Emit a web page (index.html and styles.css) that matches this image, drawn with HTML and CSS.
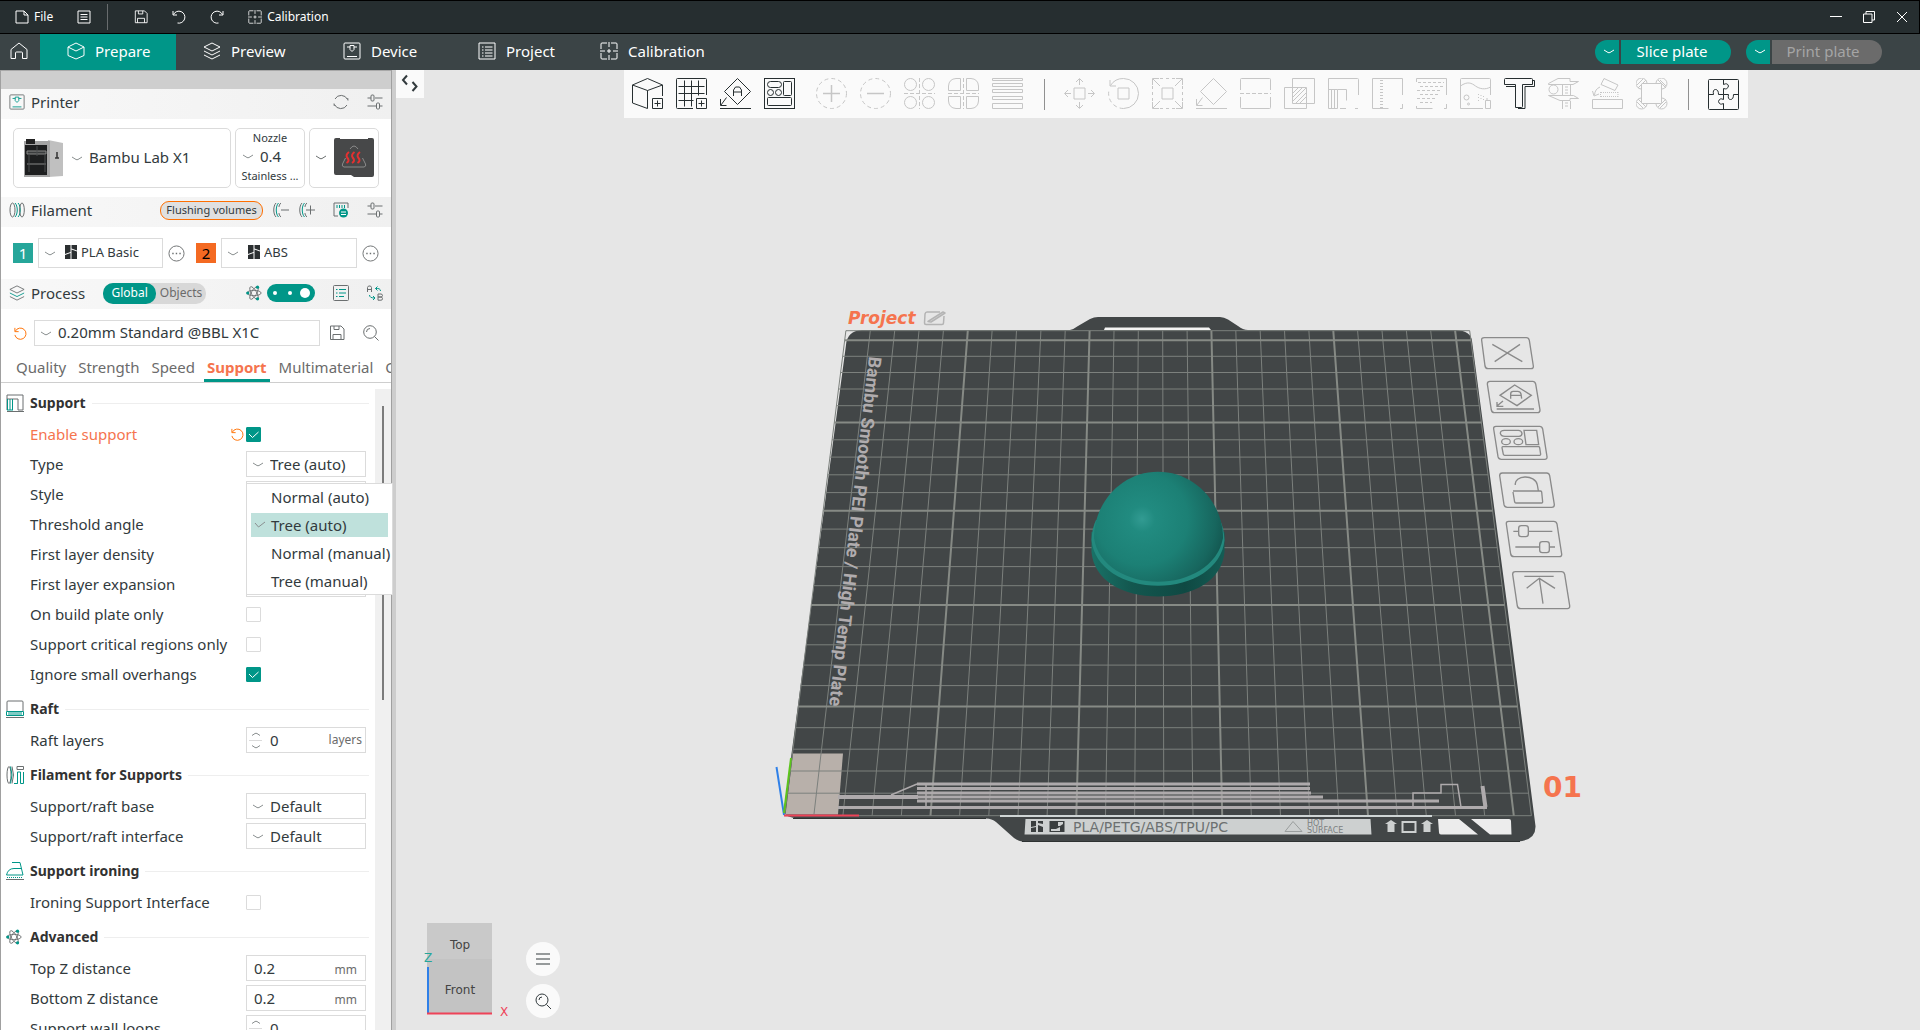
FILE: index.html
```html
<!DOCTYPE html>
<html lang="en">
<head>
  <meta charset="utf-8">
  <title>Bambu Studio</title>
  <meta name="viewport" content="width=device-width, initial-scale=1.0">
  <link rel="stylesheet" href="styles.css">
</head>
<body>

<!-- shared icons -->
<svg class="defs" aria-hidden="true">
  <symbol id="i-sliders" viewBox="0 0 16 16"><path d="M.5 4H4M8 4h7.500M.5 12H9M13 12h2.500"/><rect x="4" y="1" width="3" height="6" rx="1"/><rect x="9.500" y="9" width="3" height="6" rx="1"/></symbol>
  <symbol id="i-save" viewBox="0 0 16 16"><path d="M1.500 1h10.500L15 4v10.500H1.500zM4 14.500V9.500h8v5M5 1v3.500h5V1"/></symbol>
  <symbol id="i-reset" viewBox="0 0 16 16"><path d="M2 2v4h4M2.500 5.500A6 6 0 1 1 2 9.500"/></symbol>
  <symbol id="i-dots" viewBox="0 0 18 18"><circle cx="9" cy="9" r="8"/><path d="M4.500 9h1.500M8.200 9h1.500M12 9h1.500" stroke-width="1.500"/></symbol>
  <symbol id="i-calib" viewBox="0 0 18 18"><path d="M1 7V2q0-1 1-1h5M11 1h5q1 0 1 1v5M17 11v5q0 1-1 1h-5M7 17H2q-1 0-1-1v-5M0 9h5M13 9h5M9 0v5M9 13v5M7 9h4M9 7v4"/></symbol>
  <symbol id="i-layers" viewBox="0 0 18 18"><path d="M9 1l8 4-8 4-8-4z"/><path class="accent" d="M1 9l8 4 8-4"/><path d="M1 13l8 4 8-4" /></symbol>
  <symbol id="i-device" viewBox="0 0 18 18"><rect x="1" y="1" width="16" height="16" rx="1"/><g class="accent"><path d="M4 5h3M11 5h3M7 3.500h4v4L9 9.500 7 7.500zM4 14.500h10"/></g></symbol>
  <symbol id="i-atom" viewBox="0 0 18 18"><ellipse cx="9" cy="9" rx="8" ry="3"/><ellipse cx="9" cy="9" rx="8" ry="3" transform="rotate(60 9 9)"/><ellipse cx="9" cy="9" rx="8" ry="3" transform="rotate(120 9 9)"/><g fill="#009688" stroke="none"><circle cx="2" cy="9" r="1.800"/><circle cx="13" cy="2.500" r="1.800"/><circle cx="13" cy="15.500" r="1.800"/></g></symbol>
  <symbol id="i-brush" viewBox="0 0 12 14"><path d="M.5 13.500c2-1 1-3 3-4 2-.5 3.500 1 2.500 2.500-1 1.500-3 1.500-5.500 1.500zM4 9l5-7c1.500-1 2.500 0 2 1.500L6.500 10"/></symbol>
  <symbol id="i-brand" viewBox="0 0 12 14"><path fill="#2b2f31" stroke="none" d="M0 0h5.500v7L0 9zM0 10l5.500-2v6H0zM6.500 0H12v5.500L6.500 3.500zM6.500 4.500L12 6.500V14H6.500z"/></symbol>
</svg>

<header class="titlebar">
  <button class="tb-btn file"><svg class="ic13" viewBox="0 0 14 14"><path d="M1 1h8l4 4v8H1zM9 1v4h4"/></svg>File</button>
  <button class="tb-btn list" aria-label="Menu"><svg class="ic13" viewBox="0 0 14 14"><path d="M1 1h12v12H1zM3.500 4.500h7M3.500 7h7M3.500 9.500h7"/></svg></button>
  <span class="tb-sep"></span>
  <button class="tb-btn" aria-label="Save"><svg class="ic13"><use href="#i-save"/></svg></button>
  <button class="tb-btn" aria-label="Undo"><svg class="ic13" viewBox="0 0 14 14"><path d="M1 1v4h4M1.500 4.500A6 6 0 1 1 5.500 13"/></svg></button>
  <button class="tb-btn" aria-label="Redo"><svg class="ic13" viewBox="0 0 14 14"><path d="M13 1v4H9M12.500 4.500A6 6 0 1 0 8.500 13"/></svg></button>
  <button class="tb-btn"><svg class="ic13"><use href="#i-calib"/></svg>Calibration</button>
  <div class="win-btns">
    <button aria-label="Minimize"><svg class="ic12" viewBox="0 0 12 12"><path d="M0 5.500h12"/></svg></button>
    <button aria-label="Restore"><svg class="ic12" viewBox="0 0 12 12"><path d="M.5 3h8.500v8.500H.5zM3 3V.5h8.500V9H9"/></svg></button>
    <button aria-label="Close"><svg class="ic12" viewBox="0 0 12 12"><path d="M1 1l10 10M11 1L1 11"/></svg></button>
  </div>
</header>

<nav class="nav">
  <a href="#" class="home" aria-label="Home"><svg class="ic18" viewBox="0 0 18 18"><path d="M1 7.500L9 1l8 6.500V16.500h-4.500V11q0-1-1-1h-5q-1 0-1 1v5.500H1z"/></svg></a>
  <a href="#" class="active"><svg class="ic18" viewBox="0 0 18 18"><path d="M9 1l8 4v8.500L9 17l-8-3.500V5zM1 5l8 4 8-4"/></svg>Prepare</a>
  <a href="#"><svg class="ic18"><use href="#i-layers"/></svg>Preview</a>
  <a href="#"><svg class="ic18"><use href="#i-device"/></svg>Device</a>
  <a href="#"><svg class="ic18" viewBox="0 0 18 18"><path d="M1 1h16v16H1zM4 5h1.500M4 8h1.500M4 11h1.500M4 14h1.500M7 5h7.500M7 8h7.500M7 11h7.500M7 14h7.500"/></svg>Project</a>
  <a href="#"><svg class="ic18"><use href="#i-calib"/></svg>Calibration</a>
  <div class="actions">
    <div class="split">
      <button class="drop" aria-label="Slice options"><svg viewBox="0 0 12 6"><path d="M1 1l4 2.500q1 .5 2 0L11 1"/></svg></button><button class="main">Slice plate</button>
    </div>
    <div class="split">
      <button class="drop" aria-label="Print options"><svg viewBox="0 0 12 6"><path d="M1 1l4 2.500q1 .5 2 0L11 1"/></svg></button><button class="main" disabled>Print plate</button>
    </div>
  </div>
</nav>

<div class="workspace">

<aside class="sidebar">
  <div class="strip"></div>

  <div class="sec-head">
    <svg class="ic16"><use href="#i-device"/></svg><h2>Printer</h2>
    <div class="tools wide">
      <button aria-label="Sync"><svg class="ic16" viewBox="0 0 16 16"><path d="M2 5a7 7 0 0 1 12.500.5M14 11A7 7 0 0 1 1.500 10.500M1 9.500l.3 2.500M15 6.500L14.700 4"/></svg></button>
      <button aria-label="Printer settings"><svg class="ic16"><use href="#i-sliders"/></svg></button>
    </div>
  </div>

  <div class="printer">
    <div class="card model">
      <svg class="thumb" viewBox="0 0 40 40">
        <path d="M25 2l15 3v33l-15 1z" fill="#c0c0c0"/><path d="M1 3h26v36H1z" fill="#a4a4a4"/>
        <path d="M2 7h22v30H2z" fill="#1d1e1f"/><path d="M3 1h9v5H3z" fill="#222"/>
        <path d="M4 13h19v3H4zM4 26h19" fill="#3a3c3d" stroke="#888"/><path d="M14 8v10M6 16v18M22 16v18" stroke="#4b4d4e"/>
        <path d="M34 14v6M32 20h4" stroke="#333" stroke-width="1.500"/>
      </svg>
      <select class="bare big" aria-label="Printer"><option>Bambu Lab X1</option></select>
    </div>
    <div class="card nozzle">
      <label for="nozzle">Nozzle</label>
      <select id="nozzle" class="bare"><option>0.4</option></select>
      <span>Stainless ...</span>
    </div>
    <button class="card plate" aria-label="Plate type">
      <svg class="chev" viewBox="0 0 12 6"><path d="M1 1l4 2.500q1 .5 2 0L11 1"/></svg>
      <svg class="heat" viewBox="0 0 40 40">
        <path d="M2 0h4v1h28V0h4q2 0 2 2v35q0 2-2 2H20l-3-2H2q-2 0-2-2V2q0-2 2-2z" fill="#474849"/>
        <path d="M16 11q4-6 8 0M11.500 20L8.500 26q-1 2.500 1.500 3h20q2.500-.5 1.500-3L28.500 20" fill="none" stroke="#8a8a8a"/>
        <path d="M15 14q-4 3-1.500 6t-1 5M20.500 14q-4 3-1.500 6t-1 5M26 14q-4 3-1.500 6t-1 5" fill="none" stroke="#e53030" stroke-width="2"/>
      </svg>
    </button>
  </div>

  <div class="sec-head">
    <svg class="ic16" viewBox="0 0 16 16"><ellipse cx="3.500" cy="8" rx="2.500" ry="7"/><path class="accent" d="M6 1c3 3 3 11 0 14M9 1c3 3 3 11 0 14"/><ellipse cx="13" cy="8" rx="2.300" ry="7"/></svg><h2>Filament</h2>
    <div class="tools">
      <button class="flush">Flushing volumes</button>
      <button aria-label="Remove filament"><svg class="ic16" viewBox="0 0 16 16"><path d="M3 1C0 4 0 12 3 15M8 1c-1.500 1-2 3-2 4M8 15c-1.500-1-2-3-2-4M8 8h8"/><path class="accent" d="M5.500 1C2.500 4 2.500 12 5.500 15"/></svg></button>
      <button class="add" aria-label="Add filament"><svg class="ic16" viewBox="0 0 16 16"><path d="M3 1C0 4 0 12 3 15M8 1c-1.500 1-2 3-2 4M8 15c-1.500-1-2-3-2-4M7 8h9M11.500 3.500v9"/><path class="accent" d="M5.500 1C2.500 4 2.500 12 5.500 15"/></svg></button>
      <button class="ams" aria-label="Sync AMS"><svg class="ic16" viewBox="0 0 16 16"><path d="M1 6V1h14v5M1 6v8h4"/><path class="accent" d="M4 3v3M6.500 3v3M9 3v3M11.500 3v3"/><circle cx="10.500" cy="11" r="4.500" fill="#009688" stroke="none"/><path class="on-dot" d="M8 10h5M8 12.500h5"/></svg></button>
      <button aria-label="Filament settings"><svg class="ic16"><use href="#i-sliders"/></svg></button>
    </div>
  </div>

  <div class="filaments">
    <span class="swatch one">1</span>
    <div class="fil"><svg class="brand"><use href="#i-brand"/></svg><select aria-label="Filament 1"><option>PLA Basic</option></select></div>
    <button class="more" aria-label="Edit filament 1"><svg class="ic17"><use href="#i-dots"/></svg></button>
    <span class="swatch two">2</span>
    <div class="fil"><svg class="brand"><use href="#i-brand"/></svg><select aria-label="Filament 2"><option>ABS</option></select></div>
    <button class="more" aria-label="Edit filament 2"><svg class="ic17"><use href="#i-dots"/></svg></button>
  </div>

  <div class="sec-head process">
    <svg class="ic16"><use href="#i-layers"/></svg><h2>Process</h2>
    <div class="scope"><button class="on">Global</button><button>Objects</button></div>
    <div class="tools">
      <svg class="ic16"><use href="#i-atom"/></svg>
      <button class="mode" aria-label="Mode"><i></i><i></i><b></b></button>
      <button class="tpl" aria-label="Parameter list"><svg class="ic16" viewBox="0 0 16 16"><rect x=".5" y=".5" width="15" height="15" rx="1"/><path class="accent" d="M3 4.500h1.500M6 4.500h7M3 8h1.500M6 8h7M3 11.500h1.500M6 11.500h5"/></svg></button>
      <button class="cmp" aria-label="Compare presets"><svg class="ic16" viewBox="0 0 16 16"><path d="M.5 7V2.500l1-1.500h2l1 1.500V7M.5 4.500h4M11 9h3q1.500.2 1.500 1.500T14 12h-3zM11 12h3q1.500.2 1.500 1.700T14 15.200h-3z"/><path class="accent" d="M13.500 6q0-3-5-2.500M10.500 1.500l-2 2 2 2M2.500 10q0 3 5 3M6 11l2 2-2 2"/></svg></button>
    </div>
  </div>

  <div class="preset">
    <button aria-label="Reset preset"><svg class="ic15 orange"><use href="#i-reset"/></svg></button>
    <select aria-label="Process preset"><option>0.20mm Standard @BBL X1C</option></select>
    <button aria-label="Save preset"><svg class="ic16"><use href="#i-save"/></svg></button>
    <button class="find" aria-label="Search"><svg class="ic16" viewBox="0 0 16 16"><circle cx="7" cy="7" r="6.300"/><path d="M3.500 7A3.500 3.500 0 0 1 7 3.500M11.500 11.500L15.500 15.500"/></svg></button>
  </div>

  <div class="tabs">
    <a href="#">Quality</a><a href="#">Strength</a><a href="#">Speed</a><a href="#" class="on">Support</a><a href="#">Multimaterial</a><a href="#">Others</a>
  </div>

  <div class="options">
    <form class="groups">
      <h3><svg class="ic18" viewBox="0 0 18 18"><path d="M1 1h16v15h-5V5M1 1v15M1 17.500h17M1 5h11"/><path class="accent" d="M1.500 5v11M4 5v11M6.500 5v11M1 16h6"/></svg>Support</h3>
      <div class="row changed">
        <label for="en">Enable support</label>
        <button type="button" class="undo" aria-label="Reset"><svg class="ic15 orange"><use href="#i-reset"/></svg></button>
        <input type="checkbox" id="en" checked>
      </div>
      <div class="row">
        <label for="type">Type</label>
        <div class="ctl">
          <select id="type"><option>Tree (auto)</option></select>
          <ul class="menu" role="listbox">
            <li role="option">Normal (auto)</li>
            <li role="option" class="on" aria-selected="true">Tree (auto)</li>
            <li role="option">Normal (manual)</li>
            <li role="option">Tree (manual)</li>
          </ul>
        </div>
      </div>
      <div class="row"><label for="style">Style</label><div class="ctl"><select id="style"></select></div></div>
      <div class="row"><label for="thr">Threshold angle</label><div class="ctl"><input type="text" id="thr"></div></div>
      <div class="row"><label for="fld">First layer density</label><div class="ctl"><input type="text" id="fld"></div></div>
      <div class="row"><label for="fle">First layer expansion</label><div class="ctl"><input type="text" id="fle"></div></div>
      <div class="row"><label for="obp">On build plate only</label><input type="checkbox" id="obp"></div>
      <div class="row"><label for="scr">Support critical regions only</label><input type="checkbox" id="scr"></div>
      <div class="row"><label for="iso">Ignore small overhangs</label><input type="checkbox" id="iso" checked></div>

      <h3><svg class="ic18" viewBox="0 0 18 18"><path d="M1 11V2q0-1 1-1h14q1 0 1 1v9M0 17.500h18"/><path class="accent" d="M.5 11.500h17v4H.5zM3 12v3M5 12v3M7 12v3M9 12v3M11 12v3M13 12v3M15 12v3"/></svg>Raft</h3>
      <div class="row"><label for="rl">Raft layers</label><div class="ctl spin"><input type="text" id="rl" value="0"><span>layers</span></div></div>

      <h3><svg class="ic18" viewBox="0 0 18 18"><ellipse cx="3" cy="9" rx="2" ry="8.500"/><path d="M6 .5q3 8.500 0 17M11 .5h6.500v3H11z"/><path class="accent" d="M4.500 .5q3 8.500 0 17M8 17.500h3.500V6h3v11.500h3V6M11.500 17.500V6"/></svg>Filament for Supports</h3>
      <div class="row"><label for="srb">Support/raft base</label><div class="ctl"><select id="srb"><option>Default</option></select></div></div>
      <div class="row"><label for="sri">Support/raft interface</label><div class="ctl"><select id="sri"><option>Default</option></select></div></div>

      <h3><svg class="ic18" viewBox="0 0 18 18"><path class="accent" d="M6 .5h8l3 12.500H.5Q2 6.500 8 6.500h7.500"/><path class="accent" stroke-dasharray="1 1" d="M1 15.500h16"/><path d="M0 17.500h18"/></svg>Support ironing</h3>
      <div class="row"><label for="isi">Ironing Support Interface</label><input type="checkbox" id="isi"></div>

      <h3><svg class="ic16"><use href="#i-atom"/></svg>Advanced</h3>
      <div class="row"><label for="tz">Top Z distance</label><div class="ctl unit"><input type="text" id="tz" value="0.2"><span>mm</span></div></div>
      <div class="row"><label for="bz">Bottom Z distance</label><div class="ctl unit"><input type="text" id="bz" value="0.2"><span>mm</span></div></div>
      <div class="row"><label for="wl">Support wall loops</label><div class="ctl spin"><input type="text" id="wl" value="0"></div></div>
    </form>
    <div class="track"><div class="thumb-bar"></div></div>
  </div>
</aside>

<main class="view">
  <svg class="scene" viewBox="396 70 1524 960" preserveAspectRatio="xMinYMin meet">
    <defs>
      <radialGradient id="dome" gradientUnits="userSpaceOnUse" cx="1142" cy="519" r="92">
        <stop offset="0" stop-color="#329b92"/><stop offset=".14" stop-color="#218b80"/><stop offset=".5" stop-color="#1c8075"/><stop offset=".8" stop-color="#17665e"/><stop offset="1" stop-color="#104d47"/>
      </radialGradient>
      <linearGradient id="base" x1="0" x2="1" y1="0" y2="0">
        <stop offset="0" stop-color="#197267"/><stop offset=".3" stop-color="#13574f"/><stop offset=".7" stop-color="#0f4943"/><stop offset="1" stop-color="#145c54"/>
      </linearGradient>
    </defs>

    <!-- build plate -->
    <path fill="#424647" d="M862 330H1070Q1074 329 1078 326L1090 319Q1094 317 1098 317H1220Q1224 317 1228 319.500L1238 326Q1243 330 1248 330H1456Q1471 331 1472 341L1506.500 600 1535.500 826Q1536 840 1518 841.500H1022Q1018 841 1014 838L996 822Q992 818.500 986 818.500H800Q784 818 784 810L846 345Q847 331 862 330z"/>
    <path fill="#f4f4f4" d="M1105 327.500h104l2 2.500H1104z"/>
    <path fill="none" stroke="#2e3232" d="M793 818.500h193M1022 841.500h498"/>
    <path fill="#b8b0aa" d="M793 753.500H843L838 814.500H785.500z"/>
    <path id="grid" class="grid"/>
    <path id="grid-bold" class="grid bold"/>
    <path class="trace" stroke-width="3" d="M917 784h393M917 788.500h393M917 793h394M917 797h406M917 801h522M838 807.500h649"/>
    <path class="trace" stroke-width="4" d="M838 797h80M1482.500 786l3 21"/>
    <path class="trace" stroke-width="1.500" d="M891 795l26-11M926 785v22M1413 807v-14h28v-8.500h16.500l3.500 22.500"/>
    <text class="plate-name" transform="translate(869 356) rotate(96.500)">Bambu Smooth PEI Plate / High Temp Plate</text>

    <!-- plate label -->
    <path stroke="#cfd5d5" stroke-width="2" d="M1000 816h432"/>
    <path fill="#cdd0d0" d="M1025.500 819H1370.500L1371.500 834.500H1024.500z"/>
    <path fill="#3a3e3f" d="M1031 821h5v5l-5 1zM1038 821h5v3l-5-1zM1031 828l5-1v5h-5zM1038 825l5 2v5h-5zM1049.500 821h15v11h-15z"/>
    <path fill="#cdd0d0" d="M1051 829h5l4-2v4h-9zM1058 822h5v2l-3 2h-2z"/>
    <text class="plate-mat" x="1073" y="832">PLA/PETG/ABS/TPU/PC</text>
    <path fill="none" stroke="#9a9e9e" d="M1285 831.500l8-10 9 10z"/>
    <text class="plate-hot" x="1307" y="826">HOT</text>
    <text class="plate-hot" x="1307" y="833">SURFACE</text>
    <path fill="#cdd0d0" d="M1385 824l6-4 6 4h-2.500v8h-7v-8zM1421 824l6-4 6 4h-2.500v8h-7v-8z"/>
    <rect x="1402.500" y="822" width="13" height="10" fill="none" stroke="#cdd0d0" stroke-width="2"/>
    <path fill="#ececec" d="M1438 819h21l19 15.500h-37q-2 0-2-2zM1471 819h38q2 0 2 2l.5 13.500H1490z"/>

    <!-- origin axes -->
    <path stroke="#2f80e8" stroke-width="2" d="M776.500 767l7.500 48"/>
    <path stroke="#5cc41c" stroke-width="2" d="M791 758l-7 55"/>
    <path stroke="#ee4358" stroke-width="2" d="M784 815.500h75"/>

    <!-- model -->
    <path fill="url(#base)" d="M1091.500 532V552C1094 580 1122 596.500 1158 596.500S1222 580 1224.500 552V532z"/>
    <path fill="#23897e" d="M1091.500 540Q1092 528 1096 520H1220Q1224 528 1224.500 540C1222 568 1192 585.800 1158 585.800S1094 568 1091.500 540z"/>
    <path fill="url(#dome)" d="M1094 538C1094 502 1122 471.700 1158 471.700S1223 502 1223 538C1218 566 1188 581.800 1158 581.800S1098 566 1094 538z"/>

    <text class="plate-title" x="848" y="324">Project</text>
    <g fill="none" stroke="#b4b4b4" stroke-width="1.500" stroke-linejoin="round"><path d="M940 312h-13q-1.500 0-2 2l-.5 9q0 1.500 1.500 1.500h16q1.500 0 1.500-1.500l.5-7M928 321.500l15-9.500 2 1-14 9z"/></g>
    <text class="plate-num" x="1543" y="797">01</text>

    <!-- plate actions -->
    <g class="pa" transform="translate(1400 300) scale(.33333)">
      <path d="M253 113H379Q386 113 388 121L400 198Q401 206 393 206H264Q257 206 255 198L245 121Q244 113 253 113zM277 133l90 52M360 133l-76 52"/>
      <path d="M270 244H398Q405 244 407 252L420 330Q420 338 413 338H283Q276 338 274 330L262 252Q262 244 270 244zM344 255l50 31-43 31-51-31zM290 327h112M309 303l-18 15M291 306v13h19M332 296v-14q0-8 8-8h13q8 0 10 8l2 14M332 286h31"/>
      <path d="M288 379H419Q426 379 428 387L441 470Q442 478 434 478H304Q296 478 294 470L281 387Q280 379 288 379zM313 391h42q9 0 11 9 0 9-9 9h-42q-12 0-14-9 0-9 12-9zM372 391h38l6 43h-38zM308 440h108q2 0 3 3l3 20q0 3-3 3H314q-3 0-4-3l-4-20q0-3 2-3z"/><ellipse cx="318" cy="425" rx="13" ry="9"/><ellipse cx="355" cy="425" rx="13" ry="9"/>
      <path d="M307 519H440Q447 519 449 527L463 614Q463 622 455 622H322Q314 622 312 614L299 527Q299 519 307 519zM339 573h82q3 0 4 3l3 30q0 3-3 3h-77q-3 0-4-3l-5-30M346 555c-5-30 60-34 66 0l3 17"/>
      <path d="M326 664H461Q469 664 471 672L485 762Q486 770 478 770H342Q334 770 332 762L319 672Q318 664 326 664zM340 694h16M386 694h71M346 741h72M449 741h16"/><rect x="356" y="677" width="29" height="33" rx="8"/><rect x="419" y="725" width="29" height="33" rx="8"/>
      <path d="M346 815H484Q492 815 494 823L509 917Q510 926 502 926H362Q354 926 352 918L338 823Q338 815 346 815zM373 829h88M418 835l11 76M380 865l38-30 47 30"/>
    </g>

    <!-- view cube -->
    <path fill="#c3c3c3" d="M427 923h65v90h-65z"/><path fill="#c9c9c9" d="M427 923h65v36h-65z"/>
    <text class="cube" x="460" y="949">Top</text>
    <text class="cube" x="460" y="994">Front</text>
    <path stroke="#2f80e8" stroke-width="2" d="M428 967v47"/>
    <path stroke="#ee4358" stroke-width="2" d="M427 1013.500h65"/>
    <text class="axis z" x="424" y="962">Z</text>
    <text class="axis x" x="500" y="1016">X</text>
  </svg>

  <button class="collapse" aria-label="Collapse sidebar"><svg viewBox="0 0 28 28"><path d="M11 5.500l-4 4.500 4 4.500M16.500 12l4 4.500-4 4.500"/></svg></button>

  <div class="toolbar">
    <button aria-label="Add"><svg viewBox="0 0 32 32"><path d="M.5 7L15.500.5 30.500 7v11M.5 7v18l15 5.500v-18L30.500 7M.5 7l15 5.500M20.500 20.500h10v10h-10zM22.500 25.500h6M25.500 22.500v6"/></svg></button>
    <button aria-label="Add plate"><svg viewBox="0 0 32 32"><path d="M30.500 17V1.500q0-1-1-1h-28q-1 0-1 1v28q0 1 1 1H17M2.500 8.500h26M2.500 15.500h26M2.500 22.500h15M8.500 2.500v26M15.500 2.500v26M22.500 2.500v15M20.500 20.500h10v10h-10zM22.500 25.500h6M25.500 22.500v6"/></svg></button>
    <button aria-label="Auto orient"><svg viewBox="0 0 32 32"><path d="M17.500.5l13 13-13 13-13-13zM0 30.500h31M6.500 19.500L1 27M.5 21v6.500h6M13.500 18v-6l2-3h4l2 3v6M13.500 14h8"/></svg></button>
    <button aria-label="Arrange"><svg viewBox="0 0 32 32"><rect x=".5" y=".5" width="30" height="30"/><rect x="3.500" y="3.500" width="14" height="6" rx="3"/><rect x="19.500" y="3.500" width="8" height="14" rx="1"/><circle cx="6.500" cy="14.500" r="3"/><circle cx="14.500" cy="14.500" r="3"/><rect x="3.500" y="19.500" width="24" height="8" rx="1"/></svg></button>
    <i class="gap"></i>
    <button disabled aria-label="Add instance"><svg viewBox="0 0 32 32"><circle cx="15.500" cy="15.500" r="15" stroke-dasharray="4 3"/><path d="M7 15.500h17M15.500 7v17" stroke-width="1.500"/></svg></button>
    <button disabled aria-label="Remove instance"><svg viewBox="0 0 32 32"><circle cx="15.500" cy="15.500" r="15" stroke-dasharray="4 3"/><path d="M7 15.500h17" stroke-width="1.500"/></svg></button>
    <button disabled aria-label="Split to objects"><svg viewBox="0 0 32 32"><circle cx="6.500" cy="6.500" r="6"/><circle cx="24.500" cy="6.500" r="6"/><circle cx="6.500" cy="24.500" r="6"/><circle cx="24.500" cy="24.500" r="6"/><path stroke-dasharray="4 2" d="M0 15.500h31M15.500 0v31"/></svg></button>
    <button disabled aria-label="Split to parts"><svg viewBox="0 0 32 32"><path d="M12.500.5v12H.5V8Q1 1 8 .5zM18.500.5v12h12V8Q30 1 23 .5zM12.500 30.500v-12H.5V23q.5 7 7.500 7.500zM18.500 30.500v-12h12V23q-.5 7-7.500 7.500z"/><path stroke-dasharray="4 2" d="M0 15.500h31M15.500 0v31"/></svg></button>
    <button disabled aria-label="Variable layer height"><svg viewBox="0 0 32 32"><path d="M.5.500h30v2H.5zM.5 5.500h30v3H.5zM.5 11.500h30v3H.5zM.5 18.500h30v3H.5zM.5 25.500h30v5H.5z"/></svg></button>
    <i class="sep"></i>
    <button disabled aria-label="Move"><svg viewBox="0 0 32 32"><path d="M10 10h11v11H10zM15.500 7V1M12 4l3.500-3.500L19 4M15.500 24v6M12 27l3.500 3.500L19 27M7 15.500H1M4 12L.5 15.500 4 19M24 15.500h6M27 12l3.500 3.500L27 19"/></svg></button>
    <button disabled aria-label="Rotate"><svg viewBox="0 0 32 32"><path d="M10 10h11v11H10zM2 2v6h6M2.500 7.500A15 15 0 0 1 15.500.5a15 15 0 0 1 0 30"/><path stroke-dasharray="4 3" d="M15.500 30.500A15 15 0 0 1 1 12"/></svg></button>
    <button disabled aria-label="Scale"><svg viewBox="0 0 32 32"><path d="M10 10h11v11H10zM1 1l7 7M30 1l-7 7M1 30l7-7M30 30l-7-7M24 .5h6.500V7M7 .5H.5V7M24 30.500h6.500V24M7 30.500H.5V24"/><path stroke-dasharray="3 3" d="M8 .5h16M8 30.500h16M.5 8v16M30.500 8v16"/></svg></button>
    <button disabled aria-label="Lay on face"><svg viewBox="0 0 32 32"><path d="M17.500.5l13 13-13 13-13-13zM0 30.500h31M6.500 19.500L1 27M.5 21v6.500h6"/></svg></button>
    <button disabled aria-label="Cut"><svg viewBox="0 0 32 32"><path d="M.5 12V1.500q0-1 1-1h28q1 0 1 1V12M.5 19v10.500q0 1 1 1h28q1 0 1-1V19"/><path stroke-dasharray="4 2" d="M0 15.500h31"/></svg></button>
    <button disabled aria-label="Boolean"><svg viewBox="0 0 32 32"><path d="M8.500.500h22v25h-22zM.5 9.500h22v21H.5zM9 15l5-5M9 19l9-9M9 23L22 10M12 25l10-10M16 25l6-6"/></svg></button>
    <button disabled aria-label="Support painting"><svg viewBox="0 0 32 32"><path d="M30.500 17V1.500q0-1-1-1H.5v30h9v-19h9v11M.5 11.500h9M3.500 12v18M6.500 12v18M12 30.500h6M30 30.500h-3"/><svg x="19" y="17" width="12" height="14"><use href="#i-brush"/></svg></svg></button>
    <button disabled aria-label="Seam painting"><svg viewBox="0 0 32 32"><path d="M30.500 17V.5H.5v30h16M28 30.500h2.500V26"/><path d="M9.500 2v28" stroke-width="3" stroke-dasharray="1 2"/><svg x="19" y="17" width="12" height="14"><use href="#i-brush"/></svg></svg></button>
    <button disabled aria-label="Fuzzy skin"><svg viewBox="0 0 32 32"><path d="M30.500 17V.5H.5V4M.5 28v2.500h16M28 30.500h2.500V26"/><path stroke-dasharray="3 2" d="M2 4.500h26M4 8.500h24M1 12.500h24M4 16.500h18M1 20.500h18M4 24.500h12"/><svg x="19" y="17" width="12" height="14"><use href="#i-brush"/></svg></svg></button>
    <button disabled aria-label="Color painting"><svg viewBox="0 0 32 32"><path d="M30.500 17V1.500q0-1-1-1h-28q-1 0-1 1v29H23M.5 8c7-5 11-3 15 0s10 4 15 1M25.500 22.500h5v8h-5zM27 22v-2"/><circle cx="6.500" cy="19.500" r="2.500"/><circle cx="8.500" cy="26" r="1"/><path stroke-dasharray="1 2" d="M18.500 16v8M21 17v6M23.500 18v4"/></svg></button>
    <button aria-label="Text"><svg viewBox="0 0 32 32"><path d="M.5 1.500q0-1 1-1h26q1 0 1 1v5h-10v22q0 1-1 1h-6V6.500H.5zM2 8.500h9M29 2.500h1.500v6H21v22h-7"/></svg></button>
    <button disabled aria-label="Measure"><svg viewBox="0 0 32 32"><path d="M.5 5.500L10 .5h12v3h8.500L25 6.500H.5zM.5 17.500h25l5 3H22v2H12zM14.500 7v10M14.500 23v8M22.500 7v10M22.500 23v8M17 9h3M17 12h3M17 15h3M17 25h3M17 28h3"/><circle cx="5.500" cy="11.500" r="4.500"/></svg></button>
    <button disabled aria-label="Assemble"><svg viewBox="0 0 32 32"><path d="M.5 21.500h30v9H.5zM12 .5l14 6.500-3 5.500-14-6zM8 9Q3 11 2.500 17M.5 13l1.500 5 5-2"/><path stroke-dasharray="1 1" d="M9 14.500h17M9 18.500h17M8.500 14v6M26 14v6"/></svg></button>
    <button disabled aria-label="Brim ears"><svg viewBox="0 0 32 32"><rect x="5.500" y="5.500" width="20" height="20" rx="1"/><path d="M5 11A5.500 5.500 0 1 1 11 5M20 5a5.500 5.500 0 1 1 6 6M5 20a5.500 5.500 0 1 0 6 6M20 26a5.500 5.500 0 1 0 6-6M1 7l6-6M2 10l8-8M24 2l6 6M22 2l8 8M1 24l6 6M2 21l8 8M24 30l6-6M22 29l8-8"/></svg></button>
    <i class="sep"></i>
    <button aria-label="Assembly view"><svg viewBox="0 0 32 32"><rect x=".5" y="1.500" width="30" height="30" rx="1"/><path d="M15.500 1.500v5q4-2 5 1.500-1 4-5 2.500v6M15.500 16.500h5q-1 5 2 5t3-5h5M15.500 31.500v-6q-4 2-5-2 1-4 5-2v-5M.5 16.500h5q-1-5 2-5t3 5h5"/></svg></button>
  </div>

  <div class="canvas-btns">
    <button aria-label="Canvas menu"><svg viewBox="0 0 34 34"><path d="M10 12h14M10 17h14M10 22h14"/></svg></button>
    <button aria-label="Zoom to fit"><svg viewBox="0 0 34 34"><circle cx="16" cy="16" r="6"/><path d="M20.500 20.500l4.500 4.500M13 16a3 3 0 0 1 3-3"/></svg></button>
  </div>
</main>
</div>

<script src="script.js"></script>
</body>
</html>
```
FILE: styles.css
```css
* {
  box-sizing: border-box;
}
html, body {
  height: 100%;
  margin: 0;
}
body {
  display: flex;
  flex-direction: column;
  overflow: hidden;
  font-family: "Noto Sans", "Open Sans", sans-serif;
  font-size: 14px;
  line-height: 20px;
  color: #323a3d;
  background: #e6e6e6;
}
button, select, input {
  font: inherit;
  color: inherit;
  margin: 0;
}
button {
  display: flex;
  align-items: center;
  justify-content: center;
  padding: 0;
  border: 0;
  background: none;
}
a {
  color: inherit;
  text-decoration: none;
}
svg {
  fill: none;
  stroke: #6b6f70;
  stroke-width: 1;
  flex: none;
}
.defs { position: absolute; width: 0; height: 0; }
.accent { stroke: var(--accent, #009688); }
.on-dot { stroke: #fff; }
.ic12 { width: 12px; height: 12px; }
.ic13 { width: 14px; height: 14px; }
.ic15 { width: 15px; height: 15px; }
.ic16 { width: 16px; height: 16px; }
.ic17 { width: 17px; height: 17px; }
.ic18 { width: 18px; height: 18px; }
.orange { stroke: #ff6f00; }

/* title bar */
.titlebar {
  display: flex;
  align-items: center;
  flex: none;
  height: 34px;
  padding-left: 15px;
  color: #fff;
  background: #262e30;
  border: 1px solid #000;
  border-left: 0;
  font-size: 12px;
}
.titlebar svg, .nav svg { stroke: #fff; }
.nav svg { --accent: #fff; }
.tb-btn { gap: 5px; margin-right: 24px; }
.tb-btn.list { margin-right: 16px; }
.tb-sep {
  width: 1px;
  height: 26px;
  margin-right: 26px;
  background: #686c6e;
}
.win-btns { display: flex; gap: 21px; margin-left: auto; padding-right: 11px; }

/* main navigation */
.nav {
  display: grid;
  grid-template-columns: 40px 136px 140px 135px 122px 160px 1fr;
  flex: none;
  height: 36px;
  color: #fff;
  background: #3b4446;
}
.nav a {
  display: flex;
  align-items: center;
  gap: 10px;
  padding: 0 0 2px 27px;
  font-size: 15px;
}
.nav a.home { padding-left: 10px; }
.nav a.active { background: #009688; }
.actions {
  display: flex;
  align-items: center;
  justify-content: flex-end;
  gap: 15px;
  padding-right: 38px;
}
.split { display: flex; gap: 2px; height: 24px; }
.split .drop {
  width: 24px;
  padding-left: 4px;
  background: #009688;
  border-radius: 12px 0 0 12px;
}
.split .drop svg { width: 12px; height: 6px; }
.split .main {
  width: 110px;
  font-size: 15px;
  background: #009688;
  border-radius: 0 12px 12px 0;
  padding: 0 8px 2px 0;
}
.split .main:disabled { color: #a5a5a5; background: #6b6b6b; }

.workspace { display: flex; flex: 1; min-height: 0; }

/* sidebar */
.sidebar {
  position: relative;
  z-index: 1;
  display: flex;
  flex-direction: column;
  flex: none;
  width: 396px;
  background: #fff;
  border-left: 1px solid #a0a0a0;
  border-right: 4px solid #cdcdcd;
  box-shadow: inset -1px 0 #a0a0a0;
}
.strip {
  flex: none;
  height: 19px;
  margin-right: 1px;
  background: #cecece;
  border-top: 1px solid #a8a8a8;
}
.sec-head {
  display: flex;
  align-items: center;
  flex: none;
  height: 30px;
  margin-right: 1px;
  padding: 0 8px 4px;
  background: linear-gradient(90deg, #f8f8f8, #f0f0f0);
}
.sec-head.process { padding-bottom: 2px; }
h2 {
  margin: 0 0 0 6px;
  font-size: 15px;
  font-weight: 400;
}
.tools { display: flex; align-items: center; margin-left: auto; }
.tools.wide { gap: 18px; }
.flush {
  width: 103px;
  height: 19px;
  margin-right: 10px;
  font-size: 11px;
  background: #e0e0e0;
  border: 1px solid #ff6f00;
  border-radius: 9px;
}
.add { margin: 0 18px 0 10px; }
.ams { margin-right: 18px; }

.printer {
  display: flex;
  gap: 4px;
  flex: none;
  padding: 9px 13px 9px 12px;
}
.card {
  height: 60px;
  border: 1px solid #dbdbdb;
  border-radius: 5px;
}
.model { display: flex; align-items: center; flex: 1; padding-left: 9px; }
.model .thumb { width: 40px; height: 40px; stroke: none; margin-right: 2px; }
.nozzle {
  display: flex;
  flex-direction: column;
  align-items: center;
  width: 70px;
  font-size: 11px;
  line-height: 18px;
}
.nozzle .bare { width: 62px; padding-left: 21px; background-position: 3px 7px; font-size: 15px; }
.plate { width: 70px; gap: 7px; }
.plate .chev { width: 12px; height: 6px; }
.plate .heat { width: 40px; height: 40px; stroke: none; }

select, input[type=text] {
  width: 100%;
  height: 26px;
  padding: 0 0 0 23px;
  font-size: 14px;
  background: #fff;
  border: 1px solid #dbdbdb;
  border-radius: 0;
  outline: none;
}
select {
  appearance: none;
  background: #fff url('data:image/svg+xml,<svg xmlns="http://www.w3.org/2000/svg" width="12" height="6"><path d="M1 1l4 2.500q1 .5 2 0L11 1" fill="none" stroke="%238a8f90"/></svg>') no-repeat 5px 10px;
}
select.bare { height: 20px; padding-bottom: 2px; border: 0; line-height: 18px; }
select.big { padding-left: 24px; background-position: 6px 8px; font-size: 15px; }

.filaments {
  display: flex;
  align-items: center;
  flex: none;
  padding: 11px 13px 11px 12px;
}
.swatch {
  width: 20px;
  height: 20px;
  margin-right: 5px;
  text-align: center;
  font-size: 15px;
}
.swatch.one { color: #fff; background: #26a69a; }
.swatch.two { color: #000; background: #f46a22; }
.fil { position: relative; width: 125px; }
.two + .fil { flex: 1; }
.fil select {
  height: 30px;
  padding: 0 0 2px 42px;
  background-position: 5px 12px;
  font-size: 13px;
}
.brand { position: absolute; left: 27px; top: 7px; width: 12px; height: 14px; }
.more { margin: 0 0 0 5px; }
.more + .swatch { margin-left: 11px; }

.scope {
  display: flex;
  height: 21px;
  margin-left: 18px;
  background: #d8d8d8;
  border-radius: 10px;
  font-size: 12px;
}
.scope button { width: 50px; color: #6b6b6b; }
.scope .on { width: 53px; color: #fff; background: #009688; border-radius: 10px; }
.mode {
  gap: 11px;
  width: 48px;
  height: 18px;
  margin: 0 18px 0 5px;
  background: #009688;
  border-radius: 9px;
}
.mode i { width: 4px; height: 4px; border-radius: 2px; background: #fff; }
.mode b { width: 10px; height: 10px; margin-left: -3px; border-radius: 5px; background: #fff; }
.tpl { margin-right: 18px; }

.preset {
  display: flex;
  align-items: center;
  flex: none;
  padding: 11px 13px 0 12px;
}
.preset select {
  flex: 1;
  width: auto;
  margin: 0 9px 0 6px;
  padding-bottom: 2px;
  font-size: 15px;
}
.find { margin-left: 18px; }

.tabs {
  display: flex;
  gap: 12px;
  flex: none;
  height: 37px;
  margin-right: 1px;
  padding: 9px 4px 0 15px;
  overflow: hidden;
  border-bottom: 1px solid #cecece;
  color: #6b6b6b;
  font-size: 15px;
  line-height: 24px;
}
.tabs .on {
  margin: 0 -3px;
  padding: 0 3px;
  color: #f5744e;
  font-weight: 700;
  border-bottom: 3px solid #009688;
}

.options { display: flex; flex: 1; min-height: 0; }
.groups { flex: 1; min-width: 0; }
h3 {
  display: flex;
  align-items: center;
  height: 36px;
  margin: 0 6px 0 5px;
  padding-top: 4px;
  gap: 6px;
  font-size: 14px;
  font-weight: 700;
  color: #323232;
}
h3 .ic16 { margin-right: 2px; }
h3::after { content: ""; flex: 1; height: 1px; background: #eee; }
.row {
  display: flex;
  align-items: center;
  height: 30px;
  padding-left: 29px;
  font-size: 15px;
}
.row label { width: 216px; white-space: nowrap; }
.changed label { width: 200px; color: #f5744e; }
.undo { margin-right: 1px; }
input[type=checkbox] {
  appearance: none;
  width: 15px;
  height: 15px;
  background: #fff;
  border: 1px solid #dbdbdb;
  border-radius: 1px;
}
input[type=checkbox]:checked {
  border-color: #009688;
  background: #009688 url('data:image/svg+xml,<svg xmlns="http://www.w3.org/2000/svg" width="13" height="13"><path d="M2 6l3.500 3.500L11.500 4" fill="none" stroke="white"/></svg>');
}
.ctl { position: relative; width: 120px; }
.ctl select, .ctl input { display: block; font-size: 15px; }
.ctl span {
  position: absolute;
  right: 4px;
  top: 3px;
  color: #6b6b6b;
  font-size: 12px;
}
.spin input {
  background: #fff url('data:image/svg+xml,<svg xmlns="http://www.w3.org/2000/svg" width="14" height="20"><path d="M3 5.500l3-2q1-.5 2 0l3 2M3 15.500l3 2q1 .5 2 0l3-2" fill="none" stroke="%238a8f90"/><path d="M0 10.500h13" stroke="%23dbdbdb"/></svg>') no-repeat 2px 2px;
}
.unit input { padding-left: 7px; }
.unit span { right: 9px; top: 5px; }

.menu {
  position: absolute;
  z-index: 2;
  left: 0;
  top: 32px;
  width: 147px;
  height: 112px;
  margin: 0;
  padding: 1px 4px;
  list-style: none;
  background: #fff;
  border: 1px solid #dbdbdb;
}
.menu li {
  height: 24px;
  margin-bottom: 4px;
  padding-left: 20px;
  line-height: 24px;
  white-space: nowrap;
}
.menu .on {
  background: #bfe1dc url('data:image/svg+xml,<svg xmlns="http://www.w3.org/2000/svg" width="12" height="8"><path d="M1 2l3.500 4L11 1" fill="none" stroke="%238a8f90"/></svg>') no-repeat 3px 8px;
}

.track {
  width: 17px;
  margin: 6px 0 0;
  padding: 17px 0 0 7px;
  background: #f0f0f0;
  border-right: 1px solid #a0a0a0;
}
.thumb-bar { width: 2px; height: 294px; background: #7c7c7c; }

/* 3D view */
.view { position: relative; flex: 1; min-width: 0; }
.scene { display: block; width: 100%; stroke: none; }
.grid { stroke: #7c807d; stroke-width: 1; }
.grid.bold { stroke: #868a85; stroke-width: 2; }
.trace { fill: none; stroke: #aeaaac; }
.plate-name { font-family: Roboto, sans-serif; font-size: 18px; font-weight: 700; fill: #b0acae; }
.plate-mat { font-family: "DejaVu Sans", sans-serif; font-size: 14px; fill: #6c7071; }
.plate-hot { font-family: "DejaVu Sans", sans-serif; font-size: 8px; fill: #7c8081; }
.plate-title { font-family: "DejaVu Sans", sans-serif; font-size: 17px; font-weight: 700; font-style: italic; fill: #f5744e; }
.plate-num { font-family: "DejaVu Sans", sans-serif; font-size: 28px; font-weight: 700; fill: #f5744e; }
.pa { stroke: #8a8a8a; stroke-width: 4; }
.cube { font-family: "DejaVu Sans", sans-serif; font-size: 12px; fill: #444; text-anchor: middle; }
.axis { font-family: "DejaVu Sans", sans-serif; font-size: 12px; }
.axis.z { fill: #26a69a; }
.axis.x { fill: #ee4358; }

.collapse {
  position: absolute;
  left: 0;
  top: 0;
  width: 28px;
  height: 28px;
  background: #fafafa;
}
.collapse svg { width: 28px; height: 28px; stroke: #323a3d; stroke-width: 2; }
.toolbar {
  position: absolute;
  left: calc(50% + 28px);
  top: 0;
  display: flex;
  gap: 12px;
  padding: 8px;
  background: #fafafa;
  transform: translateX(-50%);
}
.toolbar button svg { width: 32px; height: 32px; stroke: #262e30; }
.toolbar button:disabled svg { stroke: #c6c6c6; }
.toolbar .gap { width: 0; margin-right: -4px; }
.toolbar .sep { width: 16px; background: linear-gradient(#909090, #909090) no-repeat center / 1px 31px; }
.canvas-btns {
  position: absolute;
  left: 130px;
  bottom: 12px;
  display: flex;
  flex-direction: column;
  gap: 8px;
}
.canvas-btns button { width: 34px; height: 34px; background: #fafafa; border-radius: 17px; }
.canvas-btns svg { width: 34px; height: 34px; stroke: #323a3d; }
```
FILE: script.js
```js
// plate is 256 x 256 mm, u and v are in units of 10 mm
const SIZE = 25.6;

function project(u, v) {
  const w = 1 + 0.0077 * v;
  const x = (784.6 + 29.17 * u + 8.91 * v) / w;
  const y = (815.7 - 16.4 * v) / w;
  return x.toFixed(1) + " " + y.toFixed(1);
}

function line(u1, v1, u2, v2) {
  return "M" + project(u1, v1) + "L" + project(u2, v2);
}

let thin = "";
let bold = "";
for (let i = 0; i <= 25; i++) {
  const d = line(i, 0, i, SIZE) + line(0, i, SIZE, i);
  if (i % 5 == 0 && i > 0) {
    bold += d;
  } else {
    thin += d;
  }
}
// outer edges
thin += line(SIZE, 0, SIZE, SIZE) + line(0, SIZE, SIZE, SIZE);

document.getElementById("grid").setAttribute("d", thin);
document.getElementById("grid-bold").setAttribute("d", bold);
```
